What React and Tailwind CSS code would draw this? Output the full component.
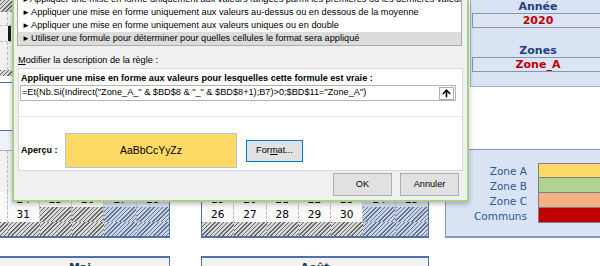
import React from 'react';
import { ArrowUp } from 'lucide-react';

const hatch = 'bg-[repeating-linear-gradient(135deg,#666_0px,#666_1px,#d8d8d8_1px,#d8d8d8_3px)]';
const hatchBlue = 'bg-[repeating-linear-gradient(135deg,#63718c_0px,#63718c_1px,#c9d4e9_1px,#c9d4e9_3px)]';

const rules = [
  'Appliquer une mise en forme uniquement aux valeurs rangées parmi les premières ou les dernières valeurs',
  'Appliquer une mise en forme uniquement aux valeurs au-dessus ou en dessous de la moyenne',
  'Appliquer une mise en forme uniquement aux valeurs uniques ou en double',
  'Utiliser une formule pour déterminer pour quelles cellules le format sera appliqué',
];

const zones = [
  { label: 'Zone A', color: 'bg-[#ffd966]' },
  { label: 'Zone B', color: 'bg-[#afd394] bg-[radial-gradient(#9cc67f_0.6px,transparent_0.7px)] bg-[length:2px_2px]' },
  { label: 'Zone C', color: 'bg-[#f4b183]' },
  { label: 'Communs', color: 'bg-[#c00000]' },
];

const DayCell = ({ day, weekend, last }) => {
  let bg = day ? 'bg-[#f9f9f9]' : hatch;
  if (weekend) bg = day ? 'bg-[#d5dff1]' : hatchBlue;
  return (
    <div
      className={`h-full flex items-center justify-center ${bg} ${
        last ? '' : 'border-r border-dashed border-[#bdbdbd]'
      }`}
    >
      {day}
    </div>
  );
};

const Calendar = ({ rowA, rowB, className }) => (
  <div
    className={`w-[228px] shrink-0 border-x border-b-2 border-[#4f6fae] text-[10.5px] text-black font-['DejaVu_Sans',sans-serif] ${className}`}
  >
    <div className="grid grid-cols-7 h-[15px] border-b border-dashed border-[#bdbdbd]">
      {rowA.map((d, i) => (
        <DayCell key={i} day={d} weekend={i > 4} last={i === 6} />
      ))}
    </div>
    <div className="grid grid-cols-7 h-[15px]">
      {rowB.map((d, i) => (
        <DayCell key={i} day={d} weekend={i > 4} last={i === 6} />
      ))}
    </div>
    <div className="grid grid-cols-7 h-[14px]">
      {[0, 1, 2, 3, 4, 5, 6].map((i) => (
        <div key={i} className={i > 4 ? hatchBlue : hatch}></div>
      ))}
    </div>
  </div>
);

const LeftStrip = () => (
  <div className="w-[12px] h-[192px] flex flex-col">
    <div className={`h-[12px] ${hatch}`}></div>
    <div className="h-[14px] bg-[#f2f2f2] border-b border-dashed border-[#bdbdbd]">
      <div className="w-[8px] h-full border-r border-dashed border-[#bdbdbd]"></div>
    </div>
    <div className="h-[15px] bg-[#f2f2f2] flex">
      <div className="w-[8px] h-full"></div>
      <div className="w-[3px] h-full bg-[#1a1a1a]"></div>
    </div>
    <div className="h-[29px] bg-[#f2f2f2] border-t border-dashed border-[#bdbdbd]">
      <div className="w-[8px] h-full border-r border-dashed border-[#bdbdbd]"></div>
    </div>
    <div className={`h-[6px] ${hatch}`}></div>
    <div className="h-[7px] bg-white border-b border-[#4f6fae]"></div>
    <div className="h-[48px] bg-white border-b border-[#4f6fae]"></div>
    <div className="h-[20px] bg-[#eef2f9] border-b border-[#9fb2d6]"></div>
    <div className="flex-1 bg-[#f2f2f2]">
      <div className="w-[8px] h-full border-r border-dashed border-[#bdbdbd]"></div>
    </div>
  </div>
);

const Dialog = () => (
  <div className="absolute left-[12px] top-0 w-[457px] h-[202px] bg-[#f0f0f0] border-x-2 border-b-2 border-[#a8cf84] shadow-[0_2px_5px_rgba(0,0,0,0.25)] flex flex-col font-['Liberation_Sans',Arial,sans-serif] text-[9.2px] text-black">
    <div className="-mt-[8px] ml-[3px] mr-[5px] border border-[#adadad] bg-white">
      {rules.map((r, i) => (
        <div
          key={i}
          className={`h-[13px] flex items-center pl-[4px] whitespace-nowrap overflow-hidden ${
            i === 3 ? 'bg-[#dcdcdc]' : ''
          }`}
        >
          <span className="w-[9px] text-[8px] leading-none">►</span>
          <span>{r}</span>
        </div>
      ))}
    </div>

    <div className="mt-[7px] h-[14px] leading-[14px] pl-[4px]">
      <span className="underline">M</span>odifier la description de la règle :
    </div>

    <div className="mt-[1px] ml-[4px] mr-[4px] h-[103px] border border-[#d9d9d9] bg-white flex flex-col">
      <div className="pt-[2px] pl-[2px] h-[16px] leading-[14px] font-bold text-[9.1px]">
        Appliquer une mise en forme aux valeurs pour lesquelles cette formule est vraie :
      </div>
      <div className="ml-[1px] mr-[6px] h-[16px] border border-[#b4b4b4] flex items-center pl-[1px]">
        <span className="whitespace-nowrap">
          =Et(Nb.Si(Indirect("Zone_A_" &amp; $BD$8 &amp; "_" &amp; $BD$8+1);B7)&gt;0;$BD$11="Zone_A")
        </span>
        <div className="ml-auto mr-[1px] w-[15px] h-[13px] border border-[#adadad] bg-white flex items-center justify-center">
          <ArrowUp size={11} strokeWidth={3.5} color="#000" />
        </div>
      </div>
      <div className="mt-[15px] border-t border-[#e6e6e6]"></div>
      <div className="mt-[16px] flex items-center pl-[2px]">
        <div className="w-[44px] shrink-0 font-bold text-[9px]">Aperçu :</div>
        <div className="w-[172px] h-[35px] shrink-0 bg-[#ffd966] border border-[#b9c3d6] flex items-center justify-center text-[10.4px]">
          AaBbCcYyZz
        </div>
        <div className="ml-[9px] w-[57px] h-[22px] shrink-0 bg-[#e1e1e1] border border-[#0078d7] flex items-center justify-center">
          For<span className="underline">m</span>at...
        </div>
      </div>
    </div>

    <div className="mt-[2px] flex justify-end gap-[8px] pr-[8px]">
      <div className="w-[59px] h-[23px] bg-[#e1e1e1] border border-[#adadad] flex items-center justify-center">
        OK
      </div>
      <div className="w-[59px] h-[23px] bg-[#e1e1e1] border border-[#adadad] flex items-center justify-center">
        Annuler
      </div>
    </div>
  </div>
);

export default function App() {
  return (
    <div className="relative w-[600px] h-[266px] overflow-hidden bg-white">
      <div className="flex">
        <div className="w-[445px] shrink-0 flex flex-col">
          <LeftStrip />
          <div className="flex">
            <Calendar
              className="-ml-[58px]"
              rowA={[22, 23, 24, 25, 26, 27, 28]}
              rowB={[29, 30, 31, null, null, null, null]}
            />
            <Calendar
              className="ml-[31px]"
              rowA={[19, 20, 21, 22, 23, 24, 25]}
              rowB={[26, 27, 28, 29, 30, null, null]}
            />
          </div>
          <div className="h-[18px]"></div>
          <div className="flex font-['DejaVu_Sans',sans-serif] text-[11px] font-bold text-[#203864]">
            <div className="-ml-[58px] w-[228px] shrink-0 h-[14px] border-t-2 border-x border-[#4f6fae] bg-[#f2f2f2] pl-[48px] text-center leading-[19px]">
              Mai
            </div>
            <div className="ml-[31px] w-[228px] shrink-0 h-[14px] border-t-2 border-x border-[#4f6fae] bg-[#f2f2f2] text-center leading-[19px]">
              Août
            </div>
          </div>
        </div>

        <div className="w-[155px] shrink-0 flex flex-col font-['DejaVu_Sans',sans-serif]">
          <div className="ml-[25px] h-[87px] bg-[#dae3f3] border-l border-b border-[#9fb0d0] overflow-hidden">
            <div className="ml-[1px] w-[140px] pr-[8px] h-[13px] leading-[13px] text-center text-[11px] font-bold text-[#1f3f7f]">
              Année
            </div>
            <div className="ml-[1px] w-[140px] pr-[8px] h-[15px] leading-[13px] text-center text-[11px] font-bold text-[#c00000] border border-[#8497b0] bg-[#dde5f4]">
              2020
            </div>
            <div className="mt-[16px] ml-[1px] w-[140px] pr-[8px] h-[13px] leading-[13px] text-center text-[11px] font-bold text-[#1f3f7f]">
              Zones
            </div>
            <div className="ml-[1px] w-[140px] pr-[8px] h-[15px] leading-[13px] text-center text-[11px] font-bold text-[#c00000] border border-[#8497b0] bg-[#dde5f4]">
              Zone_A
            </div>
          </div>
          <div className="h-[62px]"></div>
          <div className="h-[89px] bg-[#dae3f3] border-l border-t border-b-2 border-[#8497c0] pt-[13px] overflow-hidden">
            {zones.map((z, i) => (
              <div key={z.label} className="flex h-[15px]">
                <div className="w-[81px] shrink-0 text-right text-[10.5px] leading-[17px] text-[#2f5597]">
                  {z.label}
                </div>
                <div
                  className={`ml-[11px] w-[80px] shrink-0 ${z.color} border-x border-b border-[#7f7f7f] ${
                    i === 0 ? 'border-t' : ''
                  }`}
                ></div>
              </div>
            ))}
          </div>
        </div>
      </div>
      <Dialog />
    </div>
  );
}
